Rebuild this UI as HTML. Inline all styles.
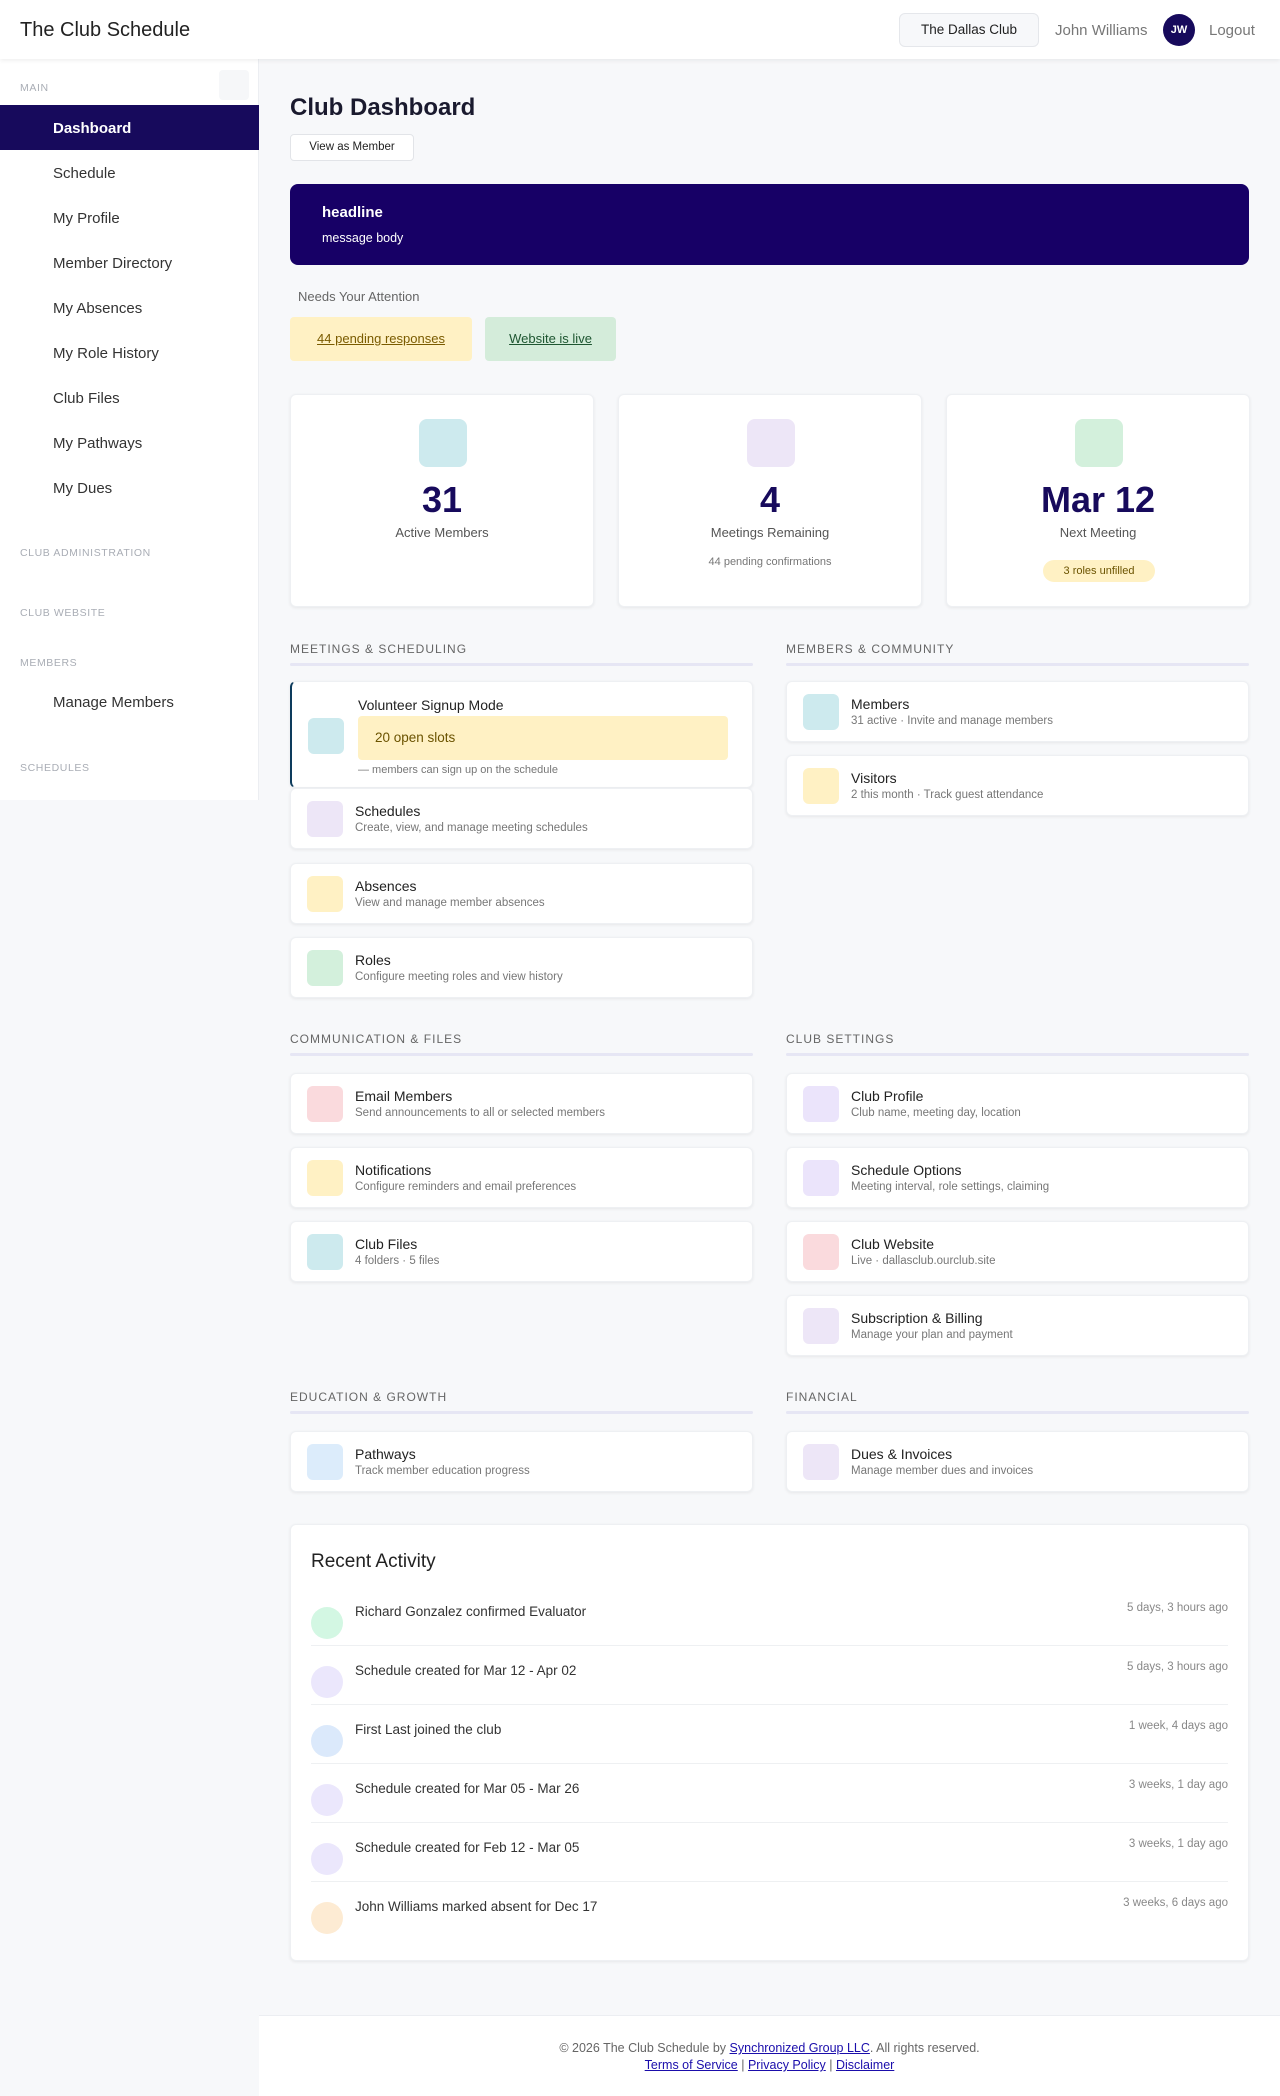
<!DOCTYPE html>
<html><head><meta charset="utf-8">
<style>
*{box-sizing:border-box;margin:0;padding:0}
body{width:1280px;height:2096px;position:relative;background:#f7f8fa;font-family:"Liberation Sans",sans-serif;color:#222;overflow:hidden}
.a{position:absolute}
.hdr{left:0;top:0;width:1280px;height:59px;background:#fff;box-shadow:0 2px 4px rgba(0,0,0,.06);z-index:2}
.side{left:0;top:59px;width:259px;height:741px;background:#fff;border-right:1px solid #eceef2}
.sl{font-size:10.5px;color:#a9adb5;letter-spacing:.6px;left:20px}
.ni{left:53px;font-size:15px;color:#333}
.card{background:#fff;border-radius:6px;box-shadow:0 1px 3px rgba(0,0,0,.07);border:1px solid #eef0f3}
.ic{width:36px;height:36px;border-radius:6px;left:16px;top:12px}
.ct{left:64px;top:14px;font-size:14px;color:#222}
.cs{left:64px;top:33px;font-size:11.5px;color:#777}
.sh{font-size:12px;letter-spacing:1px;color:#666}
.ul{height:3px;background:#e6e6f4;border-radius:2px}
.num{font-size:36px;font-weight:bold;color:#170a5c;width:100%;text-align:center}
.row{left:20px;right:20px;height:59px;border-bottom:1px solid #eef0f2}
.dot{width:32px;height:32px;border-radius:50%;left:0;top:20px}
.rt{left:44px;top:17px;font-size:13.5px;color:#333}
.rd{right:0;top:15px;font-size:11.5px;color:#888}
a{color:#1a0dab;text-decoration:underline}
</style></head><body>
<div class="a hdr">
 <div class="a" style="left:20px;top:19px;font-size:20px;color:#222">The Club Schedule</div>
 <div class="a" style="left:899px;top:13px;width:140px;height:34px;border:1px solid #e5e7eb;border-radius:6px;background:#f7f8fa;font-size:13.5px;text-align:center;line-height:32px;color:#222">The Dallas Club</div>
 <div class="a" style="left:1055px;top:22px;font-size:15px;color:#777">John Williams</div>
 <div class="a" style="left:1163px;top:14px;width:32px;height:32px;border-radius:50%;background:#170a5c;color:#fff;font-size:11px;font-weight:bold;text-align:center;line-height:32px">JW</div>
 <div class="a" style="left:1209px;top:22px;font-size:15px;color:#777">Logout</div>
</div>
<div class="a side"></div>
<div class="a" style="left:219px;top:70px;width:30px;height:30px;background:#f6f7f9;border-radius:4px"></div>
<div class="a sl" style="top:82px">MAIN</div>
<div class="a" style="left:0;top:105px;width:259px;height:45px;background:#170a5c"></div>
<div class="a ni" style="top:120px;color:#fff;font-weight:bold">Dashboard</div>
<div class="a ni" style="top:165px">Schedule</div>
<div class="a ni" style="top:210px">My Profile</div>
<div class="a ni" style="top:255px">Member Directory</div>
<div class="a ni" style="top:300px">My Absences</div>
<div class="a ni" style="top:345px">My Role History</div>
<div class="a ni" style="top:390px">Club Files</div>
<div class="a ni" style="top:435px">My Pathways</div>
<div class="a ni" style="top:480px">My Dues</div>
<div class="a sl" style="top:547px">CLUB ADMINISTRATION</div>
<div class="a sl" style="top:607px">CLUB WEBSITE</div>
<div class="a sl" style="top:657px">MEMBERS</div>
<div class="a ni" style="top:694px">Manage Members</div>
<div class="a sl" style="top:762px">SCHEDULES</div>

<div class="a" style="left:290px;top:94px;font-size:24px;font-weight:bold;color:#1a1a2e">Club Dashboard</div>
<div class="a" style="left:290px;top:134px;width:124px;height:27px;background:#fff;border:1px solid #e2e4e8;border-radius:4px;font-size:11.5px;text-align:center;line-height:25px">View as Member</div>
<div class="a" style="left:290px;top:184px;width:959px;height:81px;background:#170066;border-radius:8px;color:#fff">
 <div class="a" style="left:32px;top:20px;font-size:15px;font-weight:bold">headline</div>
 <div class="a" style="left:32px;top:47px;font-size:12.5px">message body</div>
</div>
<div class="a" style="left:298px;top:289px;font-size:13px;color:#666">Needs Your Attention</div>
<div class="a" style="left:290px;top:317px;width:182px;height:44px;background:#fff1c4;border-radius:4px;text-align:center;line-height:44px;font-size:13px;color:#7a5b00;text-decoration:underline">44 pending responses</div>
<div class="a" style="left:485px;top:317px;width:131px;height:44px;background:#d4ecda;border-radius:4px;text-align:center;line-height:44px;font-size:13px;color:#1e5631;text-decoration:underline">Website is live</div>

<div class="a card" style="left:290px;top:394px;width:304px;height:213px">
 <div class="a" style="left:128px;top:24px;width:48px;height:48px;border-radius:8px;background:#cdeaee"></div>
 <div class="a num" style="top:84px">31</div>
 <div class="a" style="top:130px;width:100%;text-align:center;font-size:13px;color:#555">Active Members</div>
</div>
<div class="a card" style="left:618px;top:394px;width:304px;height:213px">
 <div class="a" style="left:128px;top:24px;width:48px;height:48px;border-radius:8px;background:#ede6f7"></div>
 <div class="a num" style="top:84px">4</div>
 <div class="a" style="top:130px;width:100%;text-align:center;font-size:13px;color:#555">Meetings Remaining</div>
 <div class="a" style="top:161px;width:100%;text-align:center;font-size:11px;color:#777">44 pending confirmations</div>
</div>
<div class="a card" style="left:946px;top:394px;width:304px;height:213px">
 <div class="a" style="left:128px;top:24px;width:48px;height:48px;border-radius:8px;background:#d3f0dc"></div>
 <div class="a num" style="top:84px">Mar 12</div>
 <div class="a" style="top:130px;width:100%;text-align:center;font-size:13px;color:#555">Next Meeting</div>
 <div class="a" style="left:96px;top:165px;width:112px;height:22px;border-radius:11px;background:#fff1c4;font-size:11px;color:#6b5300;text-align:center;line-height:22px">3 roles unfilled</div>
</div>

<div class="a sh" style="left:290px;top:642px">MEETINGS &amp; SCHEDULING</div>
<div class="a ul" style="left:290px;top:663px;width:463px"></div>
<div class="a sh" style="left:786px;top:642px">MEMBERS &amp; COMMUNITY</div>
<div class="a ul" style="left:786px;top:663px;width:463px"></div>
<div class="a sh" style="left:290px;top:1032px">COMMUNICATION &amp; FILES</div>
<div class="a ul" style="left:290px;top:1053px;width:463px"></div>
<div class="a sh" style="left:786px;top:1032px">CLUB SETTINGS</div>
<div class="a ul" style="left:786px;top:1053px;width:463px"></div>
<div class="a sh" style="left:290px;top:1390px">EDUCATION &amp; GROWTH</div>
<div class="a ul" style="left:290px;top:1411px;width:463px"></div>
<div class="a sh" style="left:786px;top:1390px">FINANCIAL</div>
<div class="a ul" style="left:786px;top:1411px;width:463px"></div>

<div class="a card" style="left:290px;top:681px;width:463px;height:107px;border-left:2px solid #0d3b5c">
 <div class="a" style="left:16px;top:36px;width:36px;height:36px;border-radius:6px;background:#cdeaee"></div>
 <div class="a" style="left:66px;top:15px;font-size:14px">Volunteer Signup Mode</div>
 <div class="a" style="left:66px;top:34px;width:370px;height:44px;border-radius:4px;background:#fff1c4;font-size:13.5px;color:#6b5300;line-height:44px;padding-left:17px">20 open slots</div>
 <div class="a" style="left:66px;top:82px;font-size:11px;color:#777">— members can sign up on the schedule</div>
</div>
<div class="a card" style="left:290px;top:788px;width:463px;height:61px"><div class="a ic" style="background:#ede6f7"></div><div class="a ct">Schedules</div><div class="a cs">Create, view, and manage meeting schedules</div></div>
<div class="a card" style="left:290px;top:863px;width:463px;height:61px"><div class="a ic" style="background:#fff1c4"></div><div class="a ct">Absences</div><div class="a cs">View and manage member absences</div></div>
<div class="a card" style="left:290px;top:937px;width:463px;height:61px"><div class="a ic" style="background:#d3f0dc"></div><div class="a ct">Roles</div><div class="a cs">Configure meeting roles and view history</div></div>

<div class="a card" style="left:786px;top:681px;width:463px;height:61px"><div class="a ic" style="background:#cdeaee"></div><div class="a ct">Members</div><div class="a cs">31 active · Invite and manage members</div></div>
<div class="a card" style="left:786px;top:755px;width:463px;height:61px"><div class="a ic" style="background:#fff1c4"></div><div class="a ct">Visitors</div><div class="a cs">2 this month · Track guest attendance</div></div>

<div class="a card" style="left:290px;top:1073px;width:463px;height:61px"><div class="a ic" style="background:#fadadd"></div><div class="a ct">Email Members</div><div class="a cs">Send announcements to all or selected members</div></div>
<div class="a card" style="left:290px;top:1147px;width:463px;height:61px"><div class="a ic" style="background:#fff1c4"></div><div class="a ct">Notifications</div><div class="a cs">Configure reminders and email preferences</div></div>
<div class="a card" style="left:290px;top:1221px;width:463px;height:61px"><div class="a ic" style="background:#cdeaee"></div><div class="a ct">Club Files</div><div class="a cs">4 folders · 5 files</div></div>

<div class="a card" style="left:786px;top:1073px;width:463px;height:61px"><div class="a ic" style="background:#ebe4fb"></div><div class="a ct">Club Profile</div><div class="a cs">Club name, meeting day, location</div></div>
<div class="a card" style="left:786px;top:1147px;width:463px;height:61px"><div class="a ic" style="background:#ebe4fb"></div><div class="a ct">Schedule Options</div><div class="a cs">Meeting interval, role settings, claiming</div></div>
<div class="a card" style="left:786px;top:1221px;width:463px;height:61px"><div class="a ic" style="background:#fadadd"></div><div class="a ct">Club Website</div><div class="a cs">Live · dallasclub.ourclub.site</div></div>
<div class="a card" style="left:786px;top:1295px;width:463px;height:61px"><div class="a ic" style="background:#ede6f7"></div><div class="a ct">Subscription &amp; Billing</div><div class="a cs">Manage your plan and payment</div></div>

<div class="a card" style="left:290px;top:1431px;width:463px;height:61px"><div class="a ic" style="background:#dcecfb"></div><div class="a ct">Pathways</div><div class="a cs">Track member education progress</div></div>
<div class="a card" style="left:786px;top:1431px;width:463px;height:61px"><div class="a ic" style="background:#ede6f7"></div><div class="a ct">Dues &amp; Invoices</div><div class="a cs">Manage member dues and invoices</div></div>

<div class="a card" style="left:290px;top:1524px;width:959px;height:437px">
 <div class="a" style="left:20px;top:26px;font-size:19px;color:#222">Recent Activity</div>
 <div class="a row" style="top:62px"><div class="a dot" style="background:#d3f7e3"></div><div class="a rt">Richard Gonzalez confirmed Evaluator</div><div class="a rd">5 days, 3 hours ago</div></div>
 <div class="a row" style="top:121px"><div class="a dot" style="background:#ebe7fc"></div><div class="a rt">Schedule created for Mar 12 - Apr 02</div><div class="a rd">5 days, 3 hours ago</div></div>
 <div class="a row" style="top:180px"><div class="a dot" style="background:#dbe9fb"></div><div class="a rt">First Last joined the club</div><div class="a rd">1 week, 4 days ago</div></div>
 <div class="a row" style="top:239px"><div class="a dot" style="background:#ebe7fc"></div><div class="a rt">Schedule created for Mar 05 - Mar 26</div><div class="a rd">3 weeks, 1 day ago</div></div>
 <div class="a row" style="top:298px"><div class="a dot" style="background:#ebe7fc"></div><div class="a rt">Schedule created for Feb 12 - Mar 05</div><div class="a rd">3 weeks, 1 day ago</div></div>
 <div class="a row" style="top:357px;border-bottom:none"><div class="a dot" style="background:#fdebd3"></div><div class="a rt">John Williams marked absent for Dec 17</div><div class="a rd">3 weeks, 6 days ago</div></div>
</div>

<div class="a" style="left:259px;top:2015px;width:1021px;height:81px;background:#fff;border-top:1px solid #eceef2;text-align:center;font-size:12.5px;color:#666">
 <div style="margin-top:25px">© 2026 The Club Schedule by <a>Synchronized Group LLC</a>. All rights reserved.</div>
 <div style="margin-top:3px"><a>Terms of Service</a> | <a>Privacy Policy</a> | <a>Disclaimer</a></div>
</div>
</body></html>
